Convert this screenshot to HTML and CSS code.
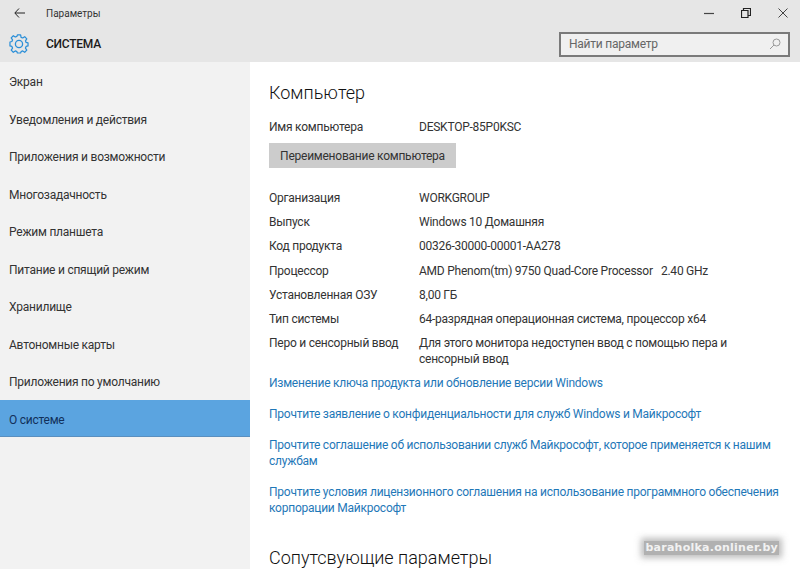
FILE: index.html
```html
<!DOCTYPE html>
<html lang="ru">
<head>
<meta charset="utf-8">
<title>Параметры</title>
<link rel="stylesheet" href="styles.css">
</head>
<body>
<div class="app">
  <header class="header">
    <div class="titlebar">
      <svg class="back" width="11" height="10" viewBox="0 0 11 10"><path d="M5 .5 .8 5 5 9.500M1 5h10" fill="none" stroke="#222" stroke-width="1"/></svg>
      <span class="apptitle">Параметры</span>
      <div class="winbtns">
        <svg width="10" height="10" viewBox="0 0 10 10"><path d="M0 5.500h10" stroke="#444" stroke-width="1.200"/></svg>
        <svg width="10" height="10" viewBox="0 0 10 10"><path d="M.5 2.500h6.500v7h-6.500zM2.500 2.500v-2h7v7h-2.500" fill="none" stroke="#222" stroke-width="1.200"/></svg>
        <svg width="10" height="10" viewBox="0 0 10 10"><path d="M.5.500l9 9M9.500.500l-9 9" stroke="#444" stroke-width="1"/></svg>
      </div>
    </div>
    <div class="headrow">
      <svg class="gear" width="20" height="20" viewBox="0 0 20 20"><path d="M8.300 1h3.400l.5 2.500 1.700.7 2.100-1.400 2.200 2.300-1.400 2.100.7 1.700 2 .5v3.200l-2 .5-.7 1.700 1.400 2.100-2.200 2.300-2.100-1.400-1.700.7-.5 1.500H8.300l-.5-1.500-1.700-.7-2.100 1.400-2.200-2.300 1.400-2.100-.7-1.700-2-.5V8.400l2-.5.7-1.700L1.800 4.100 4 1.800l2.100 1.400 1.700-.7z" fill="none" stroke="#2b8fd8" stroke-width="1.300" stroke-linejoin="round" transform="translate(.5 0) scale(.95)"/><circle cx="10" cy="10" r="3.600" fill="none" stroke="#2b8fd8" stroke-width="1.300"/></svg>
      <span class="section">СИСТЕМА</span>
      <div class="search"><span>Найти параметр</span>
        <svg width="12" height="12" viewBox="0 0 12 12"><circle cx="7.500" cy="4.500" r="3.500" fill="none" stroke="#999"/><path d="M5 7 1 11" stroke="#999"/></svg>
      </div>
    </div>
  </header>
  <div class="main">
    <nav class="nav">
      <a class="navitem">Экран</a>
      <a class="navitem">Уведомления и действия</a>
      <a class="navitem">Приложения и возможности</a>
      <a class="navitem">Многозадачность</a>
      <a class="navitem">Режим планшета</a>
      <a class="navitem">Питание и спящий режим</a>
      <a class="navitem">Хранилище</a>
      <a class="navitem">Автономные карты</a>
      <a class="navitem">Приложения по умолчанию</a>
      <a class="navitem active">О системе</a>
    </nav>
    <main class="content">
      <h1 class="title">Компьютер</h1>
      <div class="row namerow"><span>Имя компьютера</span><span>DESKTOP-85P0KSC</span></div>
      <button class="rename">Переименование компьютера</button>
      <div class="specs">
        <div class="row"><span>Организация</span><span>WORKGROUP</span></div>
        <div class="row"><span>Выпуск</span><span>Windows 10 Домашняя</span></div>
        <div class="row"><span>Код продукта</span><span>00326-30000-00001-AA278</span></div>
        <div class="row"><span>Процессор</span><span class="pre">AMD Phenom(tm) 9750 Quad-Core Processor   2.40 GHz</span></div>
        <div class="row"><span>Установленная ОЗУ</span><span>8,00 ГБ</span></div>
        <div class="row"><span>Тип системы</span><span>64-разрядная операционная система, процессор x64</span></div>
        <div class="row"><span>Перо и сенсорный ввод</span><span>Для этого монитора недоступен ввод с помощью пера и<br>сенсорный ввод</span></div>
      </div>
      <div class="links">
        <a class="link">Изменение ключа продукта или обновление версии Windows</a>
        <a class="link">Прочтите заявление о конфиденциальности для служб Windows и Майкрософт</a>
        <a class="link">Прочтите соглашение об использовании служб Майкрософт, которое применяется к нашим службам</a>
        <a class="link">Прочтите условия лицензионного соглашения на использование программного обеспечения корпорации Майкрософт</a>
      </div>
      <h2 class="title related">Сопутсвующие параметры</h2>
    </main>
  </div>
  <div class="watermark">baraholka.onliner.by</div>
</div>
</body>
</html>
```
FILE: styles.css
```css
* { box-sizing: border-box; }
html, body { margin: 0; padding: 0; }
body { width: 800px; height: 569px; overflow: hidden; background: #fff; font-family: Roboto, "Open Sans", sans-serif; color: #333; letter-spacing: -.24px; }
.app { position: relative; width: 800px; height: 569px; display: flex; flex-direction: column; overflow: hidden; }
.header { height: 62px; flex: none; background: #e6e6e6; }
.titlebar { height: 26px; display: flex; align-items: center; padding-left: 14px; }
.back { flex: none; }
.apptitle { margin-left: 21px; font-size: 10px; color: #333; letter-spacing: 0; }
.winbtns { margin-left: auto; display: flex; gap: 27px; padding-right: 12px; }
.headrow { height: 36px; display: flex; align-items: center; padding: 0 10px 0 9px; }
.gear { flex: none; }
.section { margin-left: 17px; font-size: 12px; font-weight: 500; color: #1a1a1a; }
.search { margin-left: auto; width: 231px; height: 25px; border: 2px solid #7a7a7a; background: #f0f0f0; display: flex; align-items: center; justify-content: space-between; padding: 0 7px 0 8px; font-size: 12px; color: #666; }
.main { flex: 1; display: flex; min-height: 0; }
.nav { width: 250px; flex: none; background: #f2f2f2; display: flex; flex-direction: column; }
.navitem { height: 37.500px; display: flex; align-items: center; padding: 3px 0 0 9px; font-size: 12px; color: #333; }
.navitem.active { background: #5ba4e0; box-shadow: inset 0 -1px 0 #5a8fbf; color: #12305a; }
.content { flex: 1; padding: 18px 16px 0 19px; font-size: 12px; line-height: 16px; }
.title { margin: 0; font-size: 18px; font-weight: 300; line-height: 25px; color: #111; letter-spacing: 0; }
.row { display: grid; grid-template-columns: 150px 1fr; }
.namerow { margin-top: 14px; }
.pre { white-space: pre; }
.rename { display: block; margin-top: 8px; width: 187px; height: 25px; border: 0; padding: 0; background: #cccccc; font: inherit; letter-spacing: inherit; color: #333; }
.specs { margin-top: 22px; display: flex; flex-direction: column; gap: 8.200px; }
.links { margin-top: 8px; display: flex; flex-direction: column; gap: 15px; }
.link { display: block; color: #1f78b8; }
.related { margin-top: 29px; }
.watermark { position: absolute; right: 21px; bottom: 14px; padding: 0 1px; font-family: "DejaVu Sans", sans-serif; font-size: 11px; font-weight: 700; line-height: 14px; letter-spacing: .25px; color: #f2f2f2; background: rgba(125,125,125,.6); box-shadow: 0 0 6px 3px rgba(125,125,125,.5); }
```
